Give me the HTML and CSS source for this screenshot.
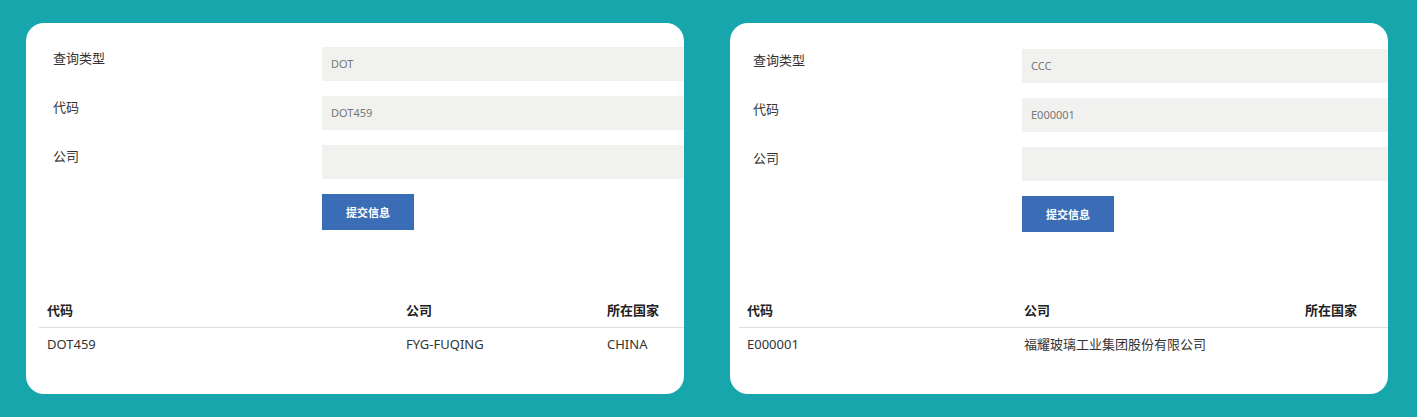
FILE: index.html
```html
<!DOCTYPE html>
<html lang="zh-CN">
<head>
  <meta charset="UTF-8">
  <title>查询</title>
  <link rel="stylesheet" href="styles.css">
</head>
<body>
  <div class="board">

    <!-- DOT query -->
    <div class="card card-a">
      <div class="form">
        <label class="label">查询类型</label>
        <div class="field">DOT</div>
        <label class="label">代码</label>
        <div class="field">DOT459</div>
        <label class="label">公司</label>
        <div class="field"></div>
        <span></span>
        <button class="btn" type="button">提交信息</button>
      </div>
      <table class="result">
        <colgroup>
          <col class="c1">
          <col class="c2">
          <col>
        </colgroup>
        <thead>
          <tr><th>代码</th><th>公司</th><th>所在国家</th></tr>
        </thead>
        <tbody>
          <tr><td>DOT459</td><td>FYG-FUQING</td><td>CHINA</td></tr>
        </tbody>
      </table>
    </div>

    <!-- CCC query -->
    <div class="card card-b">
      <div class="form">
        <label class="label">查询类型</label>
        <div class="field">CCC</div>
        <label class="label">代码</label>
        <div class="field">E000001</div>
        <label class="label">公司</label>
        <div class="field"></div>
        <span></span>
        <button class="btn" type="button">提交信息</button>
      </div>
      <table class="result">
        <colgroup>
          <col class="c1">
          <col class="c2">
          <col>
        </colgroup>
        <thead>
          <tr><th>代码</th><th>公司</th><th>所在国家</th></tr>
        </thead>
        <tbody>
          <tr><td>E000001</td><td>福耀玻璃工业集团股份有限公司</td><td></td></tr>
        </tbody>
      </table>
    </div>

  </div>
</body>
</html>
```

FILE: styles.css
```css
* {
  box-sizing: border-box;
}
body {
  margin: 0;
  background-color: #16a6ab;
  font-family: "Noto Sans", "Noto Sans CJK SC", sans-serif;
  color: #333;
}
.board {
  display: flex;
  gap: 46px;
  padding: 23px 29px 23px 26px;
}
.card {
  width: 658px;
  height: 371px;
  background-color: #fff;
  border-radius: 18px;
  overflow: hidden;
  padding-top: 24px;
}
.form {
  display: grid;
  grid-template-columns: 269px 1fr;
  row-gap: 15px;
  padding-left: 27px;
}
.card-b {
  padding-top: 26px;
}
.card-b .form {
  padding-left: 23px;
}
.label {
  font-size: 13px;
  line-height: 18px;
  padding-top: 2px;
  color: #333;
}
.field {
  height: 34px;
  background-color: #f1f1ef;
  font-size: 11px;
  line-height: 34px;
  color: #777;
  padding-left: 9px;
}
.btn {
  width: 92px;
  height: 36px;
  border: none;
  background-color: #3a6db5;
  color: #fff;
  font-family: inherit;
  font-size: 11px;
  font-weight: bold;
  padding: 0;
  cursor: pointer;
}
.result {
  margin: 63px 0 0 13px;
  width: 645px;
  table-layout: fixed;
  border-collapse: collapse;
  font-size: 13px;
}
.card-b .result {
  margin: 61px 0 0 9px;
  width: 649px;
}
.card-a .c1 { width: 359px; }
.card-a .c2 { width: 201px; }
.card-b .c1 { width: 277px; }
.card-b .c2 { width: 281px; }
.result th,
.result td {
  text-align: left;
  padding: 8px;
  line-height: 18px;
  white-space: nowrap;
}
.result th {
  font-weight: bold;
  color: #222;
  border-bottom: 1px solid #ddd;
}
.result td {
  padding-top: 7px;
  color: #333;
}
```
